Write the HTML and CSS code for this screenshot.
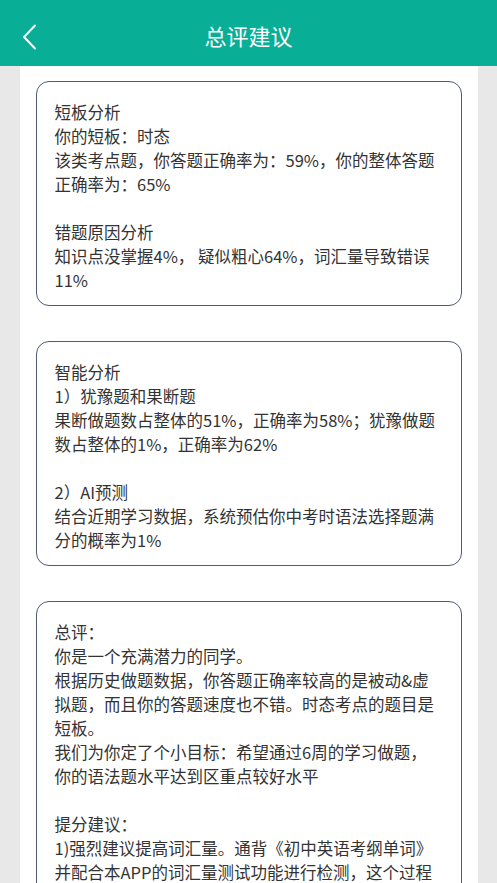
FILE: index.html
```html
<!DOCTYPE html>
<html lang="zh-CN">
<head>
<meta charset="utf-8">
<title>总评建议</title>
<link rel="stylesheet" href="styles.css">
</head>
<body>
<header class="topbar">
  <span class="back">
    <svg width="16" height="26" viewBox="0 0 16 26"><path d="M13 1.5 L2 13 L13 24.5" fill="none" stroke="#ffffff" stroke-width="2" stroke-linecap="round" stroke-linejoin="round"/></svg>
  </span>
  <h1 class="title">总评建议</h1>
</header>
<main class="column">
  <section class="card">
    <p>短板分析</p>
    <p>你的短板：时态</p>
    <p>该类考点题，你答题正确率为：59%，你的整体答题正确率为：65%</p>
    <p class="blank"></p>
    <p>错题原因分析</p>
    <p>知识点没掌握4%， 疑似粗心64%，词汇量导致错误11%</p>
  </section>
  <section class="card">
    <p>智能分析</p>
    <p>1）犹豫题和果断题</p>
    <p>果断做题数占整体的51%，正确率为58%；犹豫做题数占整体的1%，正确率为62%</p>
    <p class="blank"></p>
    <p>2）AI预测</p>
    <p>结合近期学习数据，系统预估你中考时语法选择题满分的概率为1%</p>
  </section>
  <section class="card">
    <p>总评：</p>
    <p>你是一个充满潜力的同学。</p>
    <p>根据历史做题数据，你答题正确率较高的是被动&amp;虚拟题，而且你的答题速度也不错。时态考点的题目是短板。</p>
    <p>我们为你定了个小目标：希望通过6周的学习做题，你的语法题水平达到区重点较好水平</p>
    <p class="blank"></p>
    <p>提分建议：</p>
    <p>1)强烈建议提高词汇量。通背《初中英语考纲单词》并配合本APP的词汇量测试功能进行检测，这个过程需要坚持，每天都要背诵和复习。</p>
  </section>
</main>
</body>
</html>
```

FILE: styles.css
```css
html, body {
  margin: 0;
  padding: 0;
}
body {
  background: #e8e8e8;
  font-family: "Noto Sans CJK SC", "Noto Sans", sans-serif;
  color: #333333;
}
.topbar {
  height: 66px;
  background: #09ae97;
  display: flex;
  align-items: center;
  justify-content: center;
  position: relative;
}
.back {
  position: absolute;
  left: 22px;
  top: 24px;
  width: 16px;
  height: 26px;
  display: block;
}
.back svg {
  display: block;
}
.title {
  margin: 0;
  font-size: 22px;
  font-weight: 400;
  color: #ffffff;
  line-height: 30px;
  padding-top: 4px;
}
.column {
  background: #ffffff;
  margin: 0 19px 0 20px;
  padding: 15px 16px 1px 16px;
  min-height: 900px;
}
.card {
  border: 1.5px solid #4f5b73;
  border-radius: 13px;
  padding: 18px 20px 13px 17.5px;
  margin-bottom: 35px;
}
.card p {
  margin: 0;
  font-size: 16.5px;
  line-height: 24px;
  min-height: 24px;
}
```
